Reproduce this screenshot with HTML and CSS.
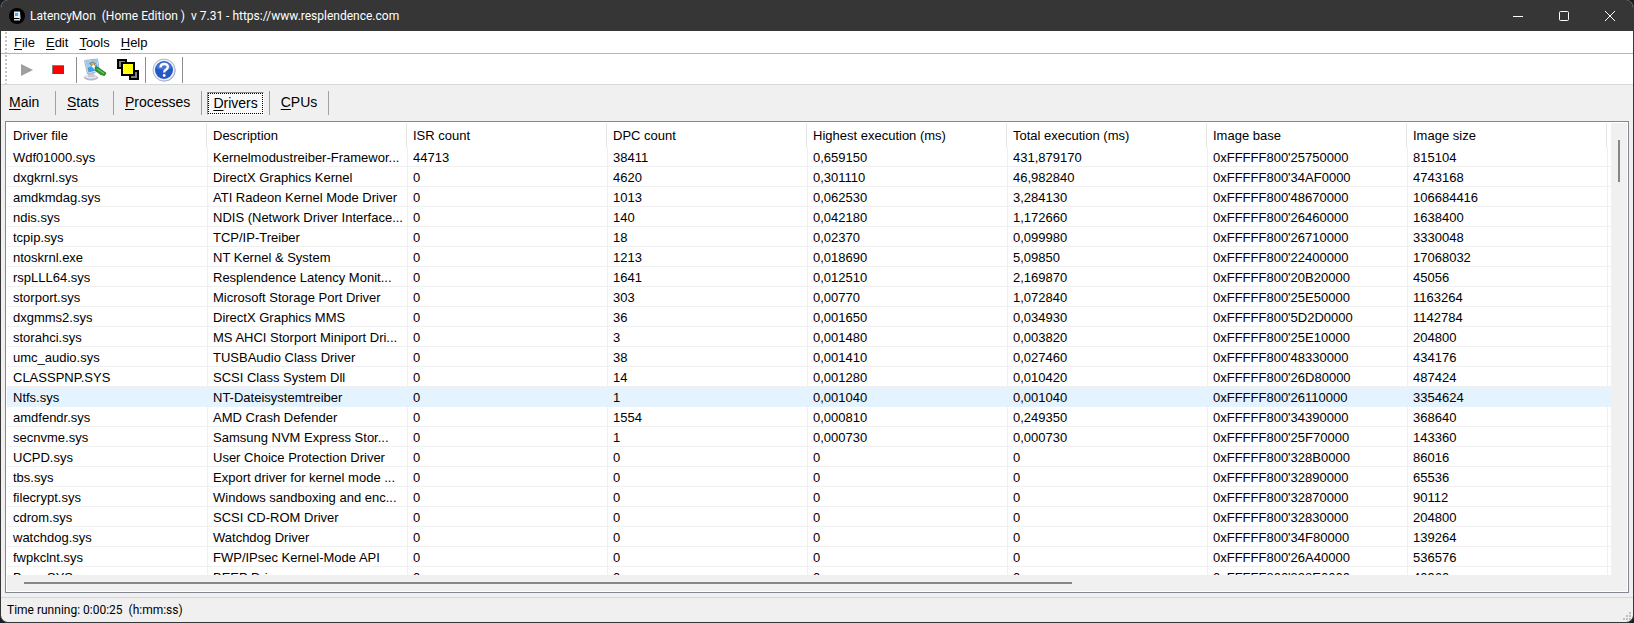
FILE: index.html
```html
<!DOCTYPE html>
<html lang="en">

<head>
    <meta charset="UTF-8">
    <meta name="viewport" content="width=device-width, initial-scale=1.0">
    <title>LatencyMon</title>
    <link rel="stylesheet" href="styles.css">
</head>

<body>
    <div class="window">
        <header class="titlebar">
            <svg class="app-icon" viewBox="0 0 16 16">
                <circle cx="8" cy="8" r="8" fill="#000" />
                <path d="M5 3.500h6l.5 6.500H5z" fill="#d7ecf8" />
                <path d="M6 5h3v3H6z" fill="#5aa7dc" />
                <path d="M5 11h6v1.500H5z" fill="#d5dbe2" />
                <path d="M8.500 8l3 3" stroke="#fff" />
            </svg>
            <span class="title">LatencyMon&nbsp; (Home Edition )&nbsp; v 7.31 - https://www.resplendence.com</span>
            <div class="window-buttons">
                <button aria-label="Minimize"><svg viewBox="0 0 10 10"><path d="M0 5.500h10" /></svg></button>
                <button aria-label="Maximize"><svg viewBox="0 0 10 10"><rect x=".5" y=".5" width="9" height="9" rx="1" /></svg></button>
                <button aria-label="Close"><svg viewBox="0 0 10 10"><path d="M0 0l10 10M10 0L0 10" /></svg></button>
            </div>
        </header>

        <nav class="menubar">
            <span class="grip"></span>
            <button><u>F</u>ile</button>
            <button><u>E</u>dit</button>
            <button><u>T</u>ools</button>
            <button><u>H</u>elp</button>
        </nav>

        <div class="toolbar">
            <span class="grip"></span>
            <div class="tools">
                <button aria-label="Start">
                    <svg width="24" height="24" viewBox="0 0 24 24"><path d="M7 6l12 6-12 6z" fill="#9f9f9f" /></svg>
                </button>
                <button aria-label="Stop">
                    <svg width="24" height="24" viewBox="0 0 24 24">
                        <rect x="6" y="7" width="12" height="9" fill="#808080" />
                        <rect x="7" y="8" width="11" height="8" fill="#f00" />
                    </svg>
                </button>
            </div>
            <div class="tools">
                <button aria-label="Options">
                    <svg width="24" height="24" viewBox="0 0 24 24">
                        <ellipse cx="8" cy="19.500" rx="7" ry="3" fill="#b3b9cc" />
                        <ellipse cx="8" cy="18.500" rx="6" ry="2.200" fill="#e4e7ef" />
                        <path d="M5 14h6l1 5H5z" fill="#c5c9d8" />
                        <path d="M1.500 2.500l13-1.500 2 12-12 3z" fill="#dfe4ee" stroke="#a9b2c6" />
                        <path d="M3 3.500l10.500-1.500 1.500 10-9.500 2.500z" fill="#3f9fe6" />
                        <path d="M3 3.500l10.500-1.500 .8 4.500L4 10z" fill="#8ed0f7" />
                        <path d="M6.500 5.500l3-1.500 3 1.500-3 2.500z" fill="#e9a63c" stroke="#7a4a18" stroke-width=".5" />
                        <path d="M9.500 7.500l4 4" stroke="#fff" stroke-width="2.500" />
                        <path d="M12 9l3 .5 8 5.500-1.500 2.500-4-1-5-4z" fill="#2f9a2f" stroke="#1d6f22" stroke-width=".8" />
                        <path d="M14.500 11l6.500 4.500" stroke="#7fd45c" />
                    </svg>
                </button>
                <button aria-label="Windows">
                    <svg width="24" height="24" viewBox="0 0 24 24">
                        <defs>
                            <pattern id="dots" width="2" height="2" patternUnits="userSpaceOnUse">
                                <rect width="2" height="2" fill="#ff0" />
                                <path d="M0 0h1v1H0zM1 1h1v1H1z" fill="#ffffa8" />
                            </pattern>
                        </defs>
                        <rect x="3" y="2" width="8" height="8" fill="#808080" stroke="#000" stroke-width="2" />
                        <rect x="15" y="13" width="8" height="8" fill="#808080" stroke="#000" stroke-width="2" />
                        <rect x="7" y="5" width="12" height="12" fill="url(#dots)" stroke="#000" stroke-width="2" />
                    </svg>
                </button>
            </div>
            <div class="tools">
                <button aria-label="Help">
                    <svg width="24" height="24" viewBox="0 0 24 24">
                        <circle cx="12.500" cy="12.500" r="11" fill="#aab2c3" />
                        <circle cx="12" cy="12" r="11" fill="#eef1f7" stroke="#9da8be" stroke-width=".8" />
                        <circle cx="12" cy="12" r="9" fill="#2458c4" />
                        <path d="M4 10a8.300 8.300 0 0 1 16 0q-8 4-16 0z" fill="#4576d8" />
                        <path d="M8.500 9.500q0-3.500 3.700-3.500t3.600 3q0 1.800-2 2.900-1.600.8-1.600 2.600" fill="none" stroke="#fff" stroke-width="2.400" />
                        <circle cx="12.200" cy="17.500" r="1.400" fill="#fff" />
                    </svg>
                </button>
            </div>
        </div>

        <nav class="tabs">
            <div class="tab"><button><u>M</u>ain</button></div>
            <div class="tab"><button><u>S</u>tats</button></div>
            <div class="tab"><button><u>P</u>rocesses</button></div>
            <div class="tab"><button class="active"><u>D</u>rivers</button></div>
            <div class="tab"><button><u>C</u>PUs</button></div>
        </nav>

        <main class="list">
            <div class="list-view">
                <table>
                    <thead>
                        <tr>
                            <th>Driver file</th>
                            <th>Description</th>
                            <th>ISR count</th>
                            <th>DPC count</th>
                            <th>Highest execution (ms)</th>
                            <th>Total execution (ms)</th>
                            <th>Image base</th>
                            <th>Image size</th>
                            <td class="rest"></td>
                        </tr>
                    </thead>
                    <tbody>
                        <tr><td>Wdf01000.sys</td><td>Kernelmodustreiber-Framewor...</td><td>44713</td><td>38411</td><td>0,659150</td><td>431,879170</td><td>0xFFFFF800'25750000</td><td>815104</td><td class="rest"></td></tr>
                        <tr><td>dxgkrnl.sys</td><td>DirectX Graphics Kernel</td><td>0</td><td>4620</td><td>0,301110</td><td>46,982840</td><td>0xFFFFF800'34AF0000</td><td>4743168</td><td class="rest"></td></tr>
                        <tr><td>amdkmdag.sys</td><td>ATI Radeon Kernel Mode Driver</td><td>0</td><td>1013</td><td>0,062530</td><td>3,284130</td><td>0xFFFFF800'48670000</td><td>106684416</td><td class="rest"></td></tr>
                        <tr><td>ndis.sys</td><td>NDIS (Network Driver Interface...</td><td>0</td><td>140</td><td>0,042180</td><td>1,172660</td><td>0xFFFFF800'26460000</td><td>1638400</td><td class="rest"></td></tr>
                        <tr><td>tcpip.sys</td><td>TCP/IP-Treiber</td><td>0</td><td>18</td><td>0,02370</td><td>0,099980</td><td>0xFFFFF800'26710000</td><td>3330048</td><td class="rest"></td></tr>
                        <tr><td>ntoskrnl.exe</td><td>NT Kernel &amp; System</td><td>0</td><td>1213</td><td>0,018690</td><td>5,09850</td><td>0xFFFFF800'22400000</td><td>17068032</td><td class="rest"></td></tr>
                        <tr><td>rspLLL64.sys</td><td>Resplendence Latency Monit...</td><td>0</td><td>1641</td><td>0,012510</td><td>2,169870</td><td>0xFFFFF800'20B20000</td><td>45056</td><td class="rest"></td></tr>
                        <tr><td>storport.sys</td><td>Microsoft Storage Port Driver</td><td>0</td><td>303</td><td>0,00770</td><td>1,072840</td><td>0xFFFFF800'25E50000</td><td>1163264</td><td class="rest"></td></tr>
                        <tr><td>dxgmms2.sys</td><td>DirectX Graphics MMS</td><td>0</td><td>36</td><td>0,001650</td><td>0,034930</td><td>0xFFFFF800'5D2D0000</td><td>1142784</td><td class="rest"></td></tr>
                        <tr><td>storahci.sys</td><td>MS AHCI Storport Miniport Dri...</td><td>0</td><td>3</td><td>0,001480</td><td>0,003820</td><td>0xFFFFF800'25E10000</td><td>204800</td><td class="rest"></td></tr>
                        <tr><td>umc_audio.sys</td><td>TUSBAudio Class Driver</td><td>0</td><td>38</td><td>0,001410</td><td>0,027460</td><td>0xFFFFF800'48330000</td><td>434176</td><td class="rest"></td></tr>
                        <tr><td>CLASSPNP.SYS</td><td>SCSI Class System Dll</td><td>0</td><td>14</td><td>0,001280</td><td>0,010420</td><td>0xFFFFF800'26D80000</td><td>487424</td><td class="rest"></td></tr>
                        <tr class="hover"><td>Ntfs.sys</td><td>NT-Dateisystemtreiber</td><td>0</td><td>1</td><td>0,001040</td><td>0,001040</td><td>0xFFFFF800'26110000</td><td>3354624</td><td class="rest"></td></tr>
                        <tr><td>amdfendr.sys</td><td>AMD Crash Defender</td><td>0</td><td>1554</td><td>0,000810</td><td>0,249350</td><td>0xFFFFF800'34390000</td><td>368640</td><td class="rest"></td></tr>
                        <tr><td>secnvme.sys</td><td>Samsung NVM Express Stor...</td><td>0</td><td>1</td><td>0,000730</td><td>0,000730</td><td>0xFFFFF800'25F70000</td><td>143360</td><td class="rest"></td></tr>
                        <tr><td>UCPD.sys</td><td>User Choice Protection Driver</td><td>0</td><td>0</td><td>0</td><td>0</td><td>0xFFFFF800'328B0000</td><td>86016</td><td class="rest"></td></tr>
                        <tr><td>tbs.sys</td><td>Export driver for kernel mode ...</td><td>0</td><td>0</td><td>0</td><td>0</td><td>0xFFFFF800'32890000</td><td>65536</td><td class="rest"></td></tr>
                        <tr><td>filecrypt.sys</td><td>Windows sandboxing and enc...</td><td>0</td><td>0</td><td>0</td><td>0</td><td>0xFFFFF800'32870000</td><td>90112</td><td class="rest"></td></tr>
                        <tr><td>cdrom.sys</td><td>SCSI CD-ROM Driver</td><td>0</td><td>0</td><td>0</td><td>0</td><td>0xFFFFF800'32830000</td><td>204800</td><td class="rest"></td></tr>
                        <tr><td>watchdog.sys</td><td>Watchdog Driver</td><td>0</td><td>0</td><td>0</td><td>0</td><td>0xFFFFF800'34F80000</td><td>139264</td><td class="rest"></td></tr>
                        <tr><td>fwpkclnt.sys</td><td>FWP/IPsec Kernel-Mode API</td><td>0</td><td>0</td><td>0</td><td>0</td><td>0xFFFFF800'26A40000</td><td>536576</td><td class="rest"></td></tr>
                        <tr><td>Beep.SYS</td><td>BEEP Driver</td><td>0</td><td>0</td><td>0</td><td>0</td><td>0xFFFFF800'328E0000</td><td>40960</td><td class="rest"></td></tr>
                    </tbody>
                </table>
            </div>
            <div class="scroll-y"><span class="thumb"></span></div>
            <div class="scroll-x"><span class="thumb"></span></div>
        </main>

        <footer class="statusbar">
            <span>Time running: 0:00:25&nbsp; (h:mm:ss)</span>
            <svg class="size-grip" width="10" height="10" viewBox="0 0 10 10">
                <path d="M6 0h2v2H6zM3 3h2v2H3zM6 3h2v2H6zM0 6h2v2H0zM3 6h2v2H3zM6 6h2v2H6z" fill="#bfbfbf" />
            </svg>
        </footer>
    </div>
</body>

</html>
```
FILE: styles.css
```css
* {
    box-sizing: border-box;
}

body {
    margin: 0;
    height: 100vh;
    background: #1c1c24;
    font-family: "Liberation Sans", Arial, sans-serif;
    font-size: 13px;
    color: #000;
}

button {
    margin: 0;
    padding: 0;
    border: none;
    background: transparent;
    font: inherit;
    color: inherit;
}

u {
    text-underline-offset: 2px;
}

.window {
    display: flex;
    flex-direction: column;
    height: 100%;
    border: 1px solid #363636;
    border-top: none;
    border-radius: 8px;
    overflow: hidden;
    background: #f0f0f0;
}

/* Title bar */
.titlebar {
    display: flex;
    align-items: center;
    height: 31px;
    padding-left: 8px;
    background: #363636;
    color: #fff;
    font-family: Roboto, "Segoe UI", sans-serif;
    font-size: 12px;
}

.app-icon {
    width: 16px;
    height: 16px;
    margin-right: 5px;
}

.title {
    flex: 1;
    white-space: nowrap;
}

.window-buttons {
    display: flex;
}

.window-buttons button {
    display: flex;
    align-items: center;
    justify-content: center;
    width: 46px;
    height: 30px;
}

.window-buttons svg {
    width: 10px;
    height: 10px;
    fill: none;
    stroke: #fff;
}

/* Menu and toolbar */
.menubar,
.toolbar {
    display: flex;
    background: #fff;
}

.menubar {
    height: 23px;
    border-bottom: 1px solid #b4b4bc;
}

.menubar button {
    margin-right: 11px;
}

.grip {
    width: 2px;
    margin: 1px 7px 0 4px;
    background: repeating-linear-gradient(#c4c4c4 0 2px, #fff 2px 4px);
}

.toolbar {
    height: 31px;
    border-bottom: 1px solid #d7d7d7;
}

.tools {
    display: flex;
    align-items: center;
    gap: 8px;
    margin: 3px 0 1px;
    padding: 0 6px;
    border-right: 1px solid #8c8c8c;
}

.grip + .tools {
    padding-left: 0;
}

.tools svg {
    display: block;
}

/* Tabs */
.tabs {
    display: flex;
    align-items: center;
    height: 36px;
    font-size: 14px;
}

.tab {
    display: flex;
    align-items: center;
    min-width: 58px;
    height: 24px;
    padding: 0 5px;
    border-right: 1px solid #a0a0a0;
}

.tab:first-child {
    min-width: 55px;
    padding-left: 2px;
}

.tab button {
    padding: 0 6px 2px;
}

.tab .active {
    height: 23px;
    padding: 0 5px;
    border: 1px solid;
    border-color: #8c8c8c #fff #fff #8c8c8c;
    outline: 1px dotted #000;
    outline-offset: -2px;
    background: #f9f9f9;
}

/* Driver list */
.list {
    display: grid;
    flex: 1;
    grid-template-columns: 1fr 16px;
    grid-template-rows: 1fr 16px;
    min-height: 0;
    margin: 0 4px 4px;
    padding: 1px;
    border: 1px solid #828790;
    background: #fff;
}

.list-view {
    min-height: 0;
    overflow: hidden;
}

table {
    width: 100%;
    table-layout: fixed;
    border-collapse: separate;
    border-spacing: 0;
}

th,
td {
    padding: 0 0 0 6px;
    text-align: left;
    white-space: nowrap;
    overflow: hidden;
}

th {
    width: 200px;
    height: 24px;
    border-right: 1px solid #e5e5e5;
    font-weight: normal;
}

tbody td {
    height: 20px;
    padding-top: 2px;
    line-height: 17px;
    border-bottom: 1px solid #f0f0f0;
}

tbody td + td {
    padding-left: 5px;
    border-left: 1px solid #f0f0f0;
}

.hover td {
    background: #e5f3ff;
    border-color: #e5f3ff;
}

.hover td + td {
    border-left-color: #e5f3ff;
}

.scroll-y,
.scroll-x {
    background: #f0f0f0;
}

.scroll-x {
    grid-column: 1 / 3;
}

.thumb {
    display: block;
    background: #868686;
}

.scroll-y .thumb {
    width: 2px;
    height: 42px;
    margin: 17px auto 0 7px;
}

.scroll-x .thumb {
    width: 64.7%;
    height: 2px;
    margin: 7px 0 0 17px;
}

/* Status bar */
.statusbar {
    display: flex;
    align-items: center;
    justify-content: space-between;
    height: 25px;
    padding-left: 6px;
    border-top: 1px solid #d7d7d7;
    font-family: Roboto, "Segoe UI", sans-serif;
    font-size: 12px;
}

.size-grip {
    align-self: flex-end;
}
```
